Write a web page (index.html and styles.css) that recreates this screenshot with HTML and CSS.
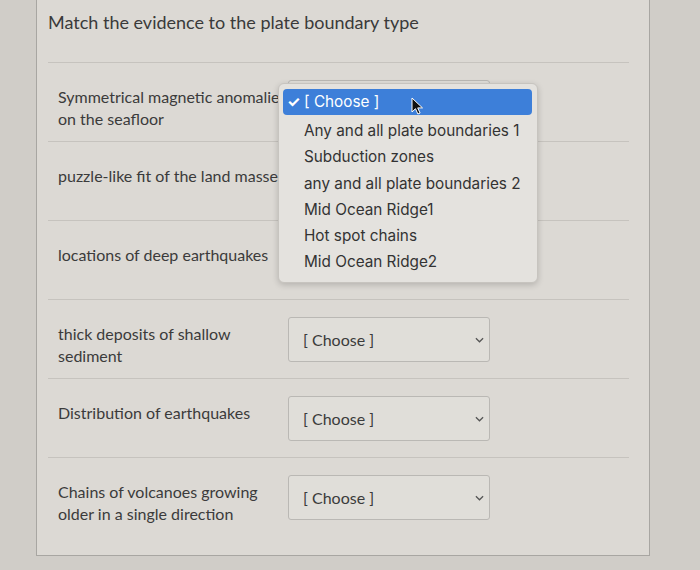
FILE: index.html
```html
<!DOCTYPE html>
<html>
<head>
<meta charset="utf-8">
<link rel="stylesheet" href="styles.css">
</head>
<body>
<div class="panel">
  <h1 class="title">Match the evidence to the plate boundary type</h1>
  <div class="rows">
    <div class="row row-open">
      <div class="label">Symmetrical magnetic anomalies on the seafloor</div>
      <div class="select"><span>[ Choose ]</span><svg class="chev" viewBox="0 0 10 6"><path d="M1 1l4 4 4-4"/></svg></div>
      <div class="popup">
        <div class="opt opt-sel"><span class="check">✓</span>[ Choose ]</div>
        <div class="opt">Any and all plate boundaries 1</div>
        <div class="opt">Subduction zones</div>
        <div class="opt">any and all plate boundaries 2</div>
        <div class="opt">Mid Ocean Ridge1</div>
        <div class="opt">Hot spot chains</div>
        <div class="opt">Mid Ocean Ridge2</div>
        <svg class="cursor" viewBox="0 0 12 18"><path d="M1 1v14l3.5-3.3 2.4 5.3 2.2-1-2.4-5.1h4.8z"/></svg>
      </div>
    </div>
    <div class="row">
      <div class="label">puzzle-like fit of the land masses</div>
      <div class="select"><span>[ Choose ]</span><svg class="chev" viewBox="0 0 10 6"><path d="M1 1l4 4 4-4"/></svg></div>
    </div>
    <div class="row">
      <div class="label">locations of deep earthquakes</div>
      <div class="select"><span>[ Choose ]</span><svg class="chev" viewBox="0 0 10 6"><path d="M1 1l4 4 4-4"/></svg></div>
    </div>
    <div class="row">
      <div class="label">thick deposits of shallow sediment</div>
      <div class="select"><span>[ Choose ]</span><svg class="chev" viewBox="0 0 10 6"><path d="M1 1l4 4 4-4"/></svg></div>
    </div>
    <div class="row">
      <div class="label">Distribution of earthquakes</div>
      <div class="select"><span>[ Choose ]</span><svg class="chev" viewBox="0 0 10 6"><path d="M1 1l4 4 4-4"/></svg></div>
    </div>
    <div class="row row-last">
      <div class="label">Chains of volcanoes growing older in a single direction</div>
      <div class="select"><span>[ Choose ]</span><svg class="chev" viewBox="0 0 10 6"><path d="M1 1l4 4 4-4"/></svg></div>
    </div>
  </div>
</div>
</body>
</html>
```
FILE: styles.css
```css
html, body {
  margin: 0;
  padding: 0;
}
body {
  background: #d0cdc8;
  width: 700px;
  height: 570px;
  overflow: hidden;
  font-family: Lato, "Open Sans", sans-serif;
  color: #3b3b3b;
}
.panel {
  margin-left: 36px;
  width: 614px;
  height: 556px;
  box-sizing: border-box;
  background: #dcd9d4;
  border: 1px solid #a8a6a2;
  border-top: none;
  padding: 0 20px 0 11px;
}
.title {
  margin: 0;
  padding-top: 10px;
  font-size: 18px;
  line-height: 24px;
  font-weight: 400;
  color: #3a3a3a;
  border-bottom: 1px solid #c6c3be;
  height: 52px;
  box-sizing: content-box;
}
.rows {
  display: flex;
  flex-direction: column;
}
.row {
  position: relative;
  display: grid;
  grid-template-columns: 230px 202px;
  align-items: start;
  height: 79px;
  box-sizing: border-box;
  padding: 17px 0 0 10px;
  border-bottom: 1px solid #c6c3be;
}
.row-open {
  z-index: 5;
}
.row-last {
  border-bottom: none;
}
.label {
  margin-top: 6px;
  font-size: 16px;
  line-height: 22px;
  color: #3b3b3b;
}
.select {
  height: 45px;
  box-sizing: border-box;
  border: 1px solid #bab8b4;
  border-radius: 3px;
  background: #e0ded9;
  display: flex;
  align-items: center;
  justify-content: space-between;
  padding: 0 5px 0 14px;
  font-size: 16px;
  color: #3b3b3b;
}
.chev {
  width: 9px;
  height: 6px;
  fill: none;
  stroke: #555;
  stroke-width: 1.4;
}
.popup {
  position: absolute;
  z-index: 10;
  left: 230px;
  top: 20px;
  width: 260px;
  box-sizing: border-box;
  padding: 5px 5px 6px 4px;
  background: #e4e2de;
  border: 1px solid #c7c4bf;
  border-radius: 6px;
  box-shadow: 0 2px 6px rgba(0,0,0,0.18);
  font-family: Inter, Roboto, sans-serif;
  font-size: 15.3px;
  color: #333;
}
.opt {
  height: 26.3px;
  line-height: 26px;
  padding-left: 21px;
  white-space: nowrap;
}
.opt-sel {
  position: relative;
  background: #3d7fd9;
  color: #fff;
  border-radius: 4px;
  margin-bottom: 3px;
  height: 26px;
}
.check {
  position: absolute;
  left: 4px;
  top: 0;
  font-size: 15px;
  font-weight: 700;
}
.cursor {
  position: absolute;
  left: 132px;
  top: 13px;
  width: 12px;
  height: 18px;
  fill: #111;
  stroke: #fff;
  stroke-width: 1;
}
```
